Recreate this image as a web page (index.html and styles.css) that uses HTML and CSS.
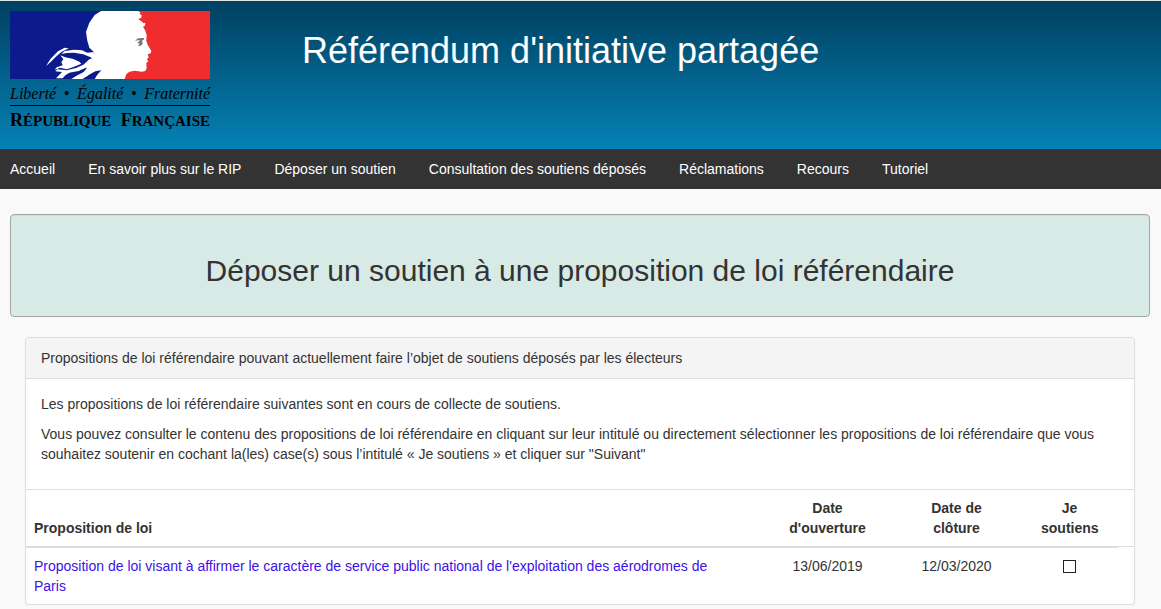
FILE: index.html
```html
<!DOCTYPE html>
<html lang="fr">
<head>
    <meta charset="UTF-8">
    <meta name="viewport" content="width=device-width, initial-scale=1.0">
    <title>Référendum d'initiative partagée</title>
    <link rel="stylesheet" href="styles.css">
</head>
<body>
    <!-- Header -->
    <header class="header">
        <a href="#" class="logo">
            <svg class="logo-flag" viewBox="30 33 600 204" aria-hidden="true">
                <rect x="30" y="33" width="320" height="204" fill="#0b1b8c"/>
                <rect x="345" y="33" width="285" height="204" fill="#f02c2f"/>
                <!-- Marianne: head and profile -->
                <path fill="#fff" d="M303 33H414L421 37L419 42L425 46L424 53L415 57L424 64L431 70L436 68L435 77L429 80L436 92L440 105L439 122L443 134L454 153L452 160L443 163L446 172L441 178L445 184L439 189L440 205L436 213L425 215L405 212L388 215L379 223L374 237H284L292 224L304 211L286 214L264 226L248 237H222L242 226L258 208L268 190L278 176L284 158L268 143L262 122L258 96L268 68L284 45Z"/>
                <!-- Marianne: hair -->
                <path fill="#fff" d="M138 198L152 176L174 154L194 143L206 145L184 156L166 172L152 186Z"/>
                <path fill="#fff" d="M184 162L194 153L222 149L246 151L262 158L284 156L284 184L272 172L250 163L222 158L200 159Z"/>
                <path fill="#fff" d="M181 166L196 172L220 177L238 185L244 191L230 197L214 203L200 208L180 203L164 210L170 202L188 196L184 186L190 178Z"/>
                <path fill="#fff" d="M168 235L186 216L166 214L172 208L200 211L228 204L250 194L268 178L286 172L276 200L256 204L236 213L208 218L196 226L188 235Z"/>
                <path fill="#fff" d="M214 237L232 226L256 214L272 202L280 212L262 228L244 237Z"/>
                <path fill="#777" d="M405 122L414 115L431 114L433 118L426 122L428 132L420 139L414 136L420 131L412 129L421 120Z"/>
            </svg>
            <span class="logo-motto"><span>Liberté</span><span>•</span><span>Égalité</span><span>•</span><span>Fraternité</span></span>
            <span class="logo-name"><span>RÉPUBLIQUE</span> <span>FRANÇAISE</span></span>
        </a>
        <h1>Référendum d'initiative partagée</h1>
    </header>

    <!-- Navigation -->
    <nav class="navbar">
        <a href="#">Accueil</a>
        <a href="#">En savoir plus sur le RIP</a>
        <a href="#">Déposer un soutien</a>
        <a href="#">Consultation des soutiens déposés</a>
        <a href="#">Réclamations</a>
        <a href="#">Recours</a>
        <a href="#">Tutoriel</a>
    </nav>

    <main class="content">
        <div class="well">
            <h2>Déposer un soutien à une proposition de loi référendaire</h2>
        </div>

        <section class="panel">
            <div class="panel-heading">Propositions de loi référendaire pouvant actuellement faire l’objet de soutiens déposés par les électeurs</div>
            <div class="panel-body">
                <p>Les propositions de loi référendaire suivantes sont en cours de collecte de soutiens.</p>
                <p>Vous pouvez consulter le contenu des propositions de loi référendaire en cliquant sur leur intitulé ou directement sélectionner les propositions de loi référendaire que vous souhaitez soutenir en cochant la(les) case(s) sous l’intitulé « Je soutiens » et cliquer sur "Suivant"</p>
            </div>
            <table class="table">
                <colgroup>
                    <col>
                    <col class="col-open">
                    <col class="col-close">
                    <col class="col-check">
                    <col class="col-gutter">
                </colgroup>
                <thead>
                    <tr>
                        <th>Proposition de loi</th>
                        <th>Date d'ouverture</th>
                        <th>Date de clôture</th>
                        <th id="soutiens">Je soutiens</th>
                        <td class="gutter"></td>
                    </tr>
                </thead>
                <tbody>
                    <tr>
                        <td><a href="#">Proposition de loi visant à affirmer le caractère de service public national de l'exploitation des aérodromes de Paris</a></td>
                        <td>13/06/2019</td>
                        <td>12/03/2020</td>
                        <td><input type="checkbox" aria-labelledby="soutiens"></td>
                        <td class="gutter"></td>
                    </tr>
                </tbody>
            </table>
        </section>
    </main>
</body>
</html>
```
FILE: styles.css
```css
* {
    box-sizing: border-box;
}

body {
    margin: 0;
    border-top: 1px solid #dbe5e4;
    background-color: #f9f9f9;
    color: #333;
    font-family: "Liberation Sans", Arial, sans-serif;
    font-size: 14px;
    line-height: 20px;
}

/* Header */
.header {
    display: flex;
    align-items: flex-start;
    gap: 92px;
    height: 148px;
    padding: 10px;
    background: linear-gradient(#004060, #0582b5);
}

.logo {
    display: block;
    width: 200px;
    color: #000;
    font-family: "Liberation Serif", serif;
    text-decoration: none;
}

.logo-flag {
    display: block;
    width: 200px;
    height: 68px;
}

.logo-motto {
    display: flex;
    justify-content: space-between;
    padding-top: 4px;
    border-bottom: 1px solid #000;
    font-size: 16px;
    font-style: italic;
    line-height: 22px;
}

.logo-name {
    display: flex;
    justify-content: space-between;
    font-size: 15px;
    font-weight: bold;
    line-height: 28px;
}

.logo-name span::first-letter {
    font-size: 18px;
}

.header h1 {
    margin: 20px 0 0;
    color: #fff;
    font-size: 36px;
    font-weight: normal;
    line-height: 40px;
}

/* Navigation */
.navbar {
    display: flex;
    gap: 33px;
    padding: 10px;
    background-color: #333;
}

.navbar a {
    color: #fff;
    text-decoration: none;
}

.navbar a:hover {
    text-decoration: underline;
}

/* Content */
.content {
    padding: 25px 11px 0 10px;
}

.well {
    padding: 39px 20px 29px;
    border: 1px solid #a3a6a5;
    border-radius: 4px;
    background-color: #d7eae5;
    box-shadow: inset 0 1px 1px rgba(0, 0, 0, 0.05);
    text-align: center;
}

.well h2 {
    margin: 0;
    font-size: 30px;
    font-weight: normal;
    line-height: 33px;
}

.panel {
    margin: 20px 15px 0;
    border: 1px solid #ddd;
    border-radius: 4px;
    background-color: #fff;
    box-shadow: 0 1px 1px rgba(0, 0, 0, 0.05);
}

.panel-heading {
    padding: 10px 15px;
    border-bottom: 1px solid #ddd;
    border-radius: 3px 3px 0 0;
    background-color: #f4f4f4;
}

.panel-body {
    padding: 15px;
    border-bottom: 1px solid #ddd;
}

.panel-body p {
    margin: 0 0 10px;
}

/* Table */
.table {
    width: 100%;
    table-layout: fixed;
    border-spacing: 0;
}

.col-open,
.col-close {
    width: 129px;
}

.col-check {
    width: 97px;
}

.col-gutter {
    width: 16px;
}

.table th,
.table td {
    padding: 8px;
    text-align: center;
}

.table th:first-child,
.table td:first-child {
    text-align: left;
}

.table thead th,
.table thead td {
    border-bottom: 1px solid #ddd;
    vertical-align: bottom;
}

.table thead th:not(:first-child) {
    padding: 8px 20px;
}

.table tbody td {
    border-top: 1px solid #ddd;
    vertical-align: top;
}

.table tbody td:first-child {
    padding-right: 40px;
}

.table .gutter {
    padding: 0;
}

.table tbody .gutter {
    border-top: none;
}

.table a {
    color: #3a12e8;
    text-decoration: none;
}

.table input {
    appearance: none;
    display: block;
    width: 13px;
    height: 13px;
    margin: 4px auto 0;
    border: 1px solid #222;
    background-color: #fff;
}

.table input:checked {
    background-color: #333;
}
```
